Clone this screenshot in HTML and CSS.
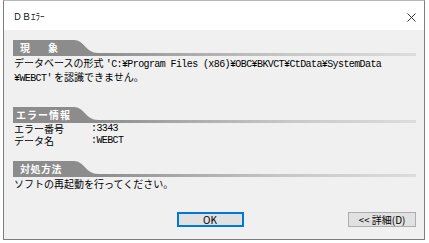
FILE: index.html
```html
<!DOCTYPE html>
<html lang="ja">
<head>
<meta charset="utf-8">
<title>DBエラー</title>
<link rel="stylesheet" href="styles.css">
</head>
<body>
<div class="window">
  <div class="titlebar">
    <span class="title">ＤＢｴﾗｰ</span>
    <svg class="close" width="9" height="9" viewBox="0 0 9 9"><path d="M0.5 0.5 L8.5 8.5 M8.5 0.5 L0.5 8.5" stroke="#333" stroke-width="1" fill="none"/></svg>
  </div>
  <div class="content">
    <section class="sec sec1">
      <div class="hdr">
        <span class="tab tab-gen">現　象</span>
        <svg class="curve" width="24" height="16" viewBox="0 0 24 16"><path d="M0 0 C10 0 12 13 24 13 V16 H0 Z" fill="#8c8c8c"/></svg>
        <span class="rule"></span>
      </div>
      <p class="txt">データベースの形式 <span class="lat">'C:¥Program Files (x86)¥OBC¥BKVCT¥CtData¥SystemData</span><br><span class="lat">¥WEBCT'</span> を認識できません。</p>
    </section>
    <section class="sec sec2">
      <div class="hdr">
        <span class="tab tab-err">エラー情報</span>
        <svg class="curve" width="24" height="16" viewBox="0 0 24 16"><path d="M0 0 C10 0 12 13 24 13 V16 H0 Z" fill="#8c8c8c"/></svg>
        <span class="rule"></span>
      </div>
      <div class="info">
        <span class="cell">エラー番号</span><span class="cell lat">:3343</span>
        <span class="cell">データ名</span><span class="cell lat">:WEBCT</span>
      </div>
    </section>
    <section class="sec sec3">
      <div class="hdr">
        <span class="tab tab-fix">対処方法</span>
        <svg class="curve" width="24" height="16" viewBox="0 0 24 16"><path d="M0 0 C10 0 12 13 24 13 V16 H0 Z" fill="#8c8c8c"/></svg>
        <span class="rule"></span>
      </div>
      <p class="txt">ソフトの再起動を行ってください。</p>
    </section>
    <div class="buttons">
      <span></span>
      <button class="btn btn-ok">OK</button>
      <button class="btn btn-detail">&lt;&lt; 詳細(D)</button>
    </div>
  </div>
</div>
</body>
</html>
```
FILE: styles.css
```css
html, body {
  margin: 0;
  padding: 0;
  background: #ffffff;
}
body {
  width: 429px;
  height: 243px;
  overflow: hidden;
  font-family: "Noto Sans CJK JP", "Noto Sans", sans-serif;
}
.window {
  margin-left: 3px;
  width: 422px;
  height: 240px;
  box-sizing: border-box;
  border: 1px solid #7e7e7e;
  border-top-color: #b8b8b8;
  background: #f0f0f0;
  display: flex;
  flex-direction: column;
}
.titlebar {
  height: 29px;
  background: #ffffff;
  display: flex;
  align-items: center;
  justify-content: space-between;
  padding: 0 8px 0 9px;
  flex: none;
}
.title {
  font-size: 9px;
  color: #111;
  margin-top: 2px;
}
.close {
  margin-top: 3px;
}
.content {
  flex: 1;
  display: flex;
  flex-direction: column;
  padding: 10px 8px 0 9px;
}
.hdr {
  display: flex;
  align-items: flex-end;
  height: 16px;
}
.tab {
  height: 16px;
  width: 61px;
  background: #8c8c8c;
  color: #ffffff;
  font-weight: bold;
  font-size: 10px;
  line-height: 16px;
  box-sizing: border-box;
  white-space: nowrap;
  flex: none;
}
.tab-gen { padding-left: 7px; letter-spacing: 4px; }
.tab-err { padding-left: 3px; letter-spacing: 1px; }
.tab-fix { padding-left: 7px; letter-spacing: 0.5px; }
.curve {
  display: block;
  flex: none;
}
.rule {
  flex: 1;
  height: 3px;
  background: linear-gradient(to right, #8c8c8c 0%, #a8a8a8 25%, #c8c8c8 60%, #dcdcdc 100%);
}
.txt {
  margin: 1px 0 0 1px;
  font-size: 10px;
  line-height: 12px;
  color: #000;
}
.lat {
  font-family: "Liberation Mono", monospace;
  font-size: 10px;
  line-height: 12px;
  letter-spacing: -0.6px;
}
.sec2 {
  margin-top: 22px;
}
.sec3 {
  margin-top: 14px;
}
.info {
  margin: 0 0 0 1px;
  display: grid;
  grid-template-columns: 77px auto;
  grid-auto-rows: 12px;
  font-size: 10px;
  line-height: 12px;
  color: #000;
}
.cell {
  display: block;
  height: 12px;
}
.buttons {
  margin-top: 22px;
  display: grid;
  grid-template-columns: 1fr auto 1fr;
  align-items: center;
  margin-left: -9px;
  margin-right: 0;
}
.btn {
  font-family: "Noto Sans CJK JP", sans-serif;
  font-size: 10px;
  height: 15px;
  line-height: 11px;
  padding: 0;
  background: #e1e1e1;
  color: #000;
  margin: 0;
}
.btn-ok {
  width: 67px;
  border: 2px solid #0078d7;
}
.btn-detail {
  width: 68px;
  border: 1px solid #adadad;
  justify-self: end;
}
```
